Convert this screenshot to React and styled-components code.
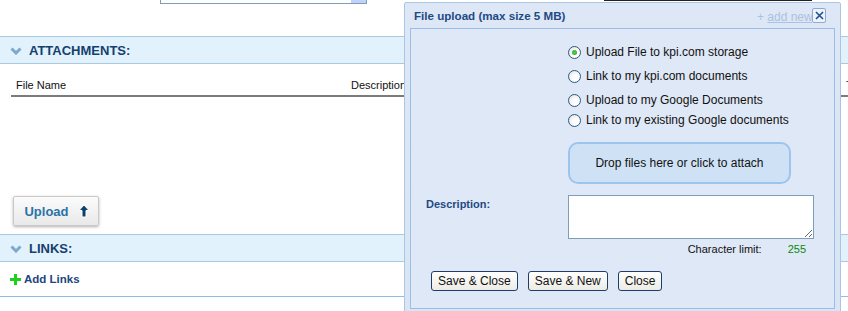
import styled, { createGlobalStyle } from 'styled-components';

const GlobalStyle = createGlobalStyle`
  html, body {
    margin: 0;
    padding: 0;
    overflow: hidden;
    background: #fff;
    font-family: 'Liberation Sans', Arial, sans-serif;
  }
`;

const Chevron = () => (
  <svg width='12' height='8' viewBox='0 0 12 8'>
    <polyline points='1.5,1.5 6,6 10.5,1.5' fill='none' stroke='#7ea9cc' strokeWidth='3' />
  </svg>
);

const UpArrow = () => (
  <svg width='12' height='14' viewBox='0 0 12 14'>
    <path d='M6 1 L11 6.5 L8 6.5 L8 13 L4 13 L4 6.5 L1 6.5 Z' fill='#0e3f6d' stroke='#fff' strokeWidth='1' />
  </svg>
);

const GreenPlus = () => (
  <svg width='11' height='11' viewBox='0 0 11 11'>
    <rect x='4' y='0' width='3' height='11' fill='#1fd11f' />
    <rect x='0' y='4' width='11' height='3' fill='#1fd11f' />
  </svg>
);

function App() {
  const options = [
    { label: 'Upload File to kpi.com storage', checked: true, h: 24 },
    { label: 'Link to my kpi.com documents', h: 24 },
    { label: 'Upload to my Google Documents', h: 24 },
    { label: 'Link to my existing Google documents', h: 16 },
  ];

  return (
    <Page>
      <GlobalStyle />
      <TopStrip>
        <SelectStub>
          <span className='arrow'></span>
        </SelectStub>
        <InputStub />
      </TopStrip>

      <SectionHeader>
        <Chevron />
        <h2>ATTACHMENTS:</h2>
      </SectionHeader>

      <TableHead>
        <HeadCell $w='335px'>File Name</HeadCell>
        <HeadCell $w='495px'>Description</HeadCell>
        <HeadCell>T</HeadCell>
      </TableHead>

      <UploadArea>
        <UploadButton>
          Upload <UpArrow />
        </UploadButton>
      </UploadArea>

      <SectionHeader>
        <Chevron />
        <h2>LINKS:</h2>
      </SectionHeader>

      <AddLinksRow>
        <GreenPlus />
        <a href='#'>Add Links</a>
      </AddLinksRow>

      <Dialog>
        <DialogHeader>
          <h3>File upload (max size 5 MB)</h3>
          <AddNew>
            + <u>add new</u>
          </AddNew>
          <CloseBox>
            <svg width='9' height='9' viewBox='0 0 9 9'>
              <path d='M1 1 L8 8 M8 1 L1 8' stroke='#1d4f91' strokeWidth='1.6' />
            </svg>
          </CloseBox>
        </DialogHeader>

        <Panel>
          <RadioList>
            {options.map((o) => (
              <RadioRow key={o.label} $h={o.h}>
                <Radio $checked={o.checked} />
                {o.label}
              </RadioRow>
            ))}
          </RadioList>

          <DropZone>Drop files here or click to attach</DropZone>

          <FieldRow>
            <FieldLabel>Description:</FieldLabel>
            <TextBox />
          </FieldRow>

          <LimitRow>
            <span>Character limit:</span>
            <span className='count'>255</span>
          </LimitRow>

          <ButtonRow>
            <DlgButton>Save &amp; Close</DlgButton>
            <DlgButton>Save &amp; New</DlgButton>
            <DlgButton>Close</DlgButton>
          </ButtonRow>
        </Panel>
      </Dialog>
    </Page>
  );
}

const Page = styled.div`
  position: relative;
  width: 848px;
  height: 311px;
  overflow: hidden;
`;

const TopStrip = styled.div`
  height: 36px;
  display: flex;
  align-items: flex-start;
`;

const SelectStub = styled.div`
  margin-left: 160px;
  width: 205px;
  height: 3px;
  border: 1px solid #7f9db9;
  border-top: none;
  display: flex;
  justify-content: flex-end;

  .arrow {
    width: 15px;
    height: 3px;
    background: #c1d3fb;
  }
`;

const InputStub = styled.div`
  margin-left: 237px;
  width: 208px;
  height: 1px;
  border-top: 1px solid #222;
  border-bottom: 1px solid #d40000;
`;

const SectionHeader = styled.div`
  height: 26px;
  display: flex;
  align-items: center;
  gap: 7px;
  padding-left: 10px;
  background: #e1f2fd;
  border-top: 1px solid #a9c9df;
  border-bottom: 1px solid #a9c9df;

  svg {
    margin-top: 1px;
  }

  h2 {
    margin: 0;
    font-size: 13px;
    font-weight: bold;
    color: #15406d;
  }
`;

const TableHead = styled.div`
  margin: 0 0 0 11px;
  height: 33px;
  padding-left: 5px;
  display: flex;
  align-items: flex-end;
  padding-bottom: 4px;
  box-sizing: border-box;
  border-bottom: 2px solid #7b7b7b;
`;

const HeadCell = styled.div`
  flex: 0 0 ${(p) => p.$w || 'auto'};
  font-size: 11px;
  color: #111;
  white-space: nowrap;
`;

const UploadArea = styled.div`
  height: 137px;
  padding: 99px 0 0 13px;
  box-sizing: border-box;
`;

const UploadButton = styled.button`
  width: 86px;
  height: 30px;
  display: flex;
  align-items: center;
  justify-content: center;
  gap: 9px;
  padding: 0 0 0 2px;
  font-family: 'Liberation Sans', Arial, sans-serif;
  font-size: 13px;
  font-weight: bold;
  color: #2a73a8;
  background: linear-gradient(#fbfbfb, #e9e9e9);
  border: 1px solid #c9c9c9;
  box-shadow: 0 1px 3px rgba(0, 0, 0, 0.3);
  border-radius: 2px;
`;

const AddLinksRow = styled.div`
  height: 34px;
  display: flex;
  align-items: center;
  gap: 3px;
  padding-left: 10px;
  border-bottom: 1px solid #8fbde6;

  a {
    font-size: 11.5px;
    font-weight: bold;
    color: #1c467e;
    text-decoration: none;
  }
`;

const Dialog = styled.div`
  position: absolute;
  left: 404px;
  top: 2px;
  width: 437px;
  height: 330px;
  box-sizing: border-box;
  background: linear-gradient(#dde7f5, #d9e5f4);
  border: 1px solid #abc5e6;
  border-radius: 2px;
`;

const DialogHeader = styled.div`
  height: 25px;
  display: flex;
  align-items: center;
  padding: 0 14px 0 9px;

  h3 {
    flex: 1;
    margin: 0 0 1px;
    font-size: 11.6px;
    font-weight: bold;
    color: #1e4a84;
  }
`;

const AddNew = styled.span`
  font-size: 12px;
  color: #a9c2e2;
  white-space: nowrap;
  width: 55px;
  overflow: hidden;
  margin-top: 3px;
`;

const CloseBox = styled.span`
  width: 12px;
  height: 13px;
  display: flex;
  align-items: center;
  justify-content: center;
  background: #eef3fb;
  border: 1px solid #8eaad3;
  border-radius: 2px;
`;

const Panel = styled.div`
  margin: 0 5px;
  height: 281px;
  box-sizing: border-box;
  background: #dfe8f6;
  border: 1px solid #9dbde9;
  padding: 11px 0 0 15px;
`;

const RadioList = styled.div`
  margin-left: 142px;
`;

const RadioRow = styled.div`
  height: ${(p) => p.$h}px;
  display: flex;
  align-items: center;
  gap: 5px;
  font-size: 12px;
  color: #111;
  white-space: nowrap;
`;

const Radio = styled.span`
  width: 11px;
  height: 11px;
  border-radius: 50%;
  border: 1px solid #2b5a8a;
  background: radial-gradient(circle at 65% 65%, #ffffff 30%, #dcdcd6 100%);
  display: flex;
  align-items: center;
  justify-content: center;

  &::after {
    content: '';
    display: ${(p) => (p.$checked ? 'block' : 'none')};
    width: 5px;
    height: 5px;
    border-radius: 50%;
    background: radial-gradient(#5cd35c, #1f9a1f);
  }
`;

const DropZone = styled.div`
  margin: 14px 0 0 142px;
  width: 223px;
  height: 42px;
  box-sizing: border-box;
  border: 2px solid #9dc4ee;
  border-radius: 10px;
  background: #cfe2f5;
  display: flex;
  align-items: center;
  justify-content: center;
  font-size: 12px;
  color: #111;
`;

const FieldRow = styled.div`
  margin-top: 11px;
  display: flex;
`;

const FieldLabel = styled.div`
  width: 142px;
  padding-top: 3px;
  font-size: 11px;
  font-weight: bold;
  color: #1e4a84;
`;

const TextBox = styled.textarea`
  width: 246px;
  height: 44px;
  box-sizing: border-box;
  border: 1px solid #7f9db9;
  background: #fff;
  margin: 0;
  padding: 2px;
  resize: both;
`;

const LimitRow = styled.div`
  margin: 4px 0 0 142px;
  width: 246px;
  height: 12px;
  display: flex;
  justify-content: flex-end;
  align-items: center;
  gap: 26px;
  padding-right: 8px;
  box-sizing: border-box;
  font-size: 11px;
  color: #111;

  .count {
    color: #0a8a0a;
  }
`;

const ButtonRow = styled.div`
  margin: 16px 0 0 5px;
  display: flex;
  gap: 10px;
`;

const DlgButton = styled.button`
  height: 20px;
  padding: 0 6px;
  font-family: 'Liberation Sans', Arial, sans-serif;
  font-size: 12px;
  color: #111;
  background: linear-gradient(#ffffff, #ecebe5);
  border: 1px solid #1f3d66;
  border-radius: 3px;
`;

export default App;
